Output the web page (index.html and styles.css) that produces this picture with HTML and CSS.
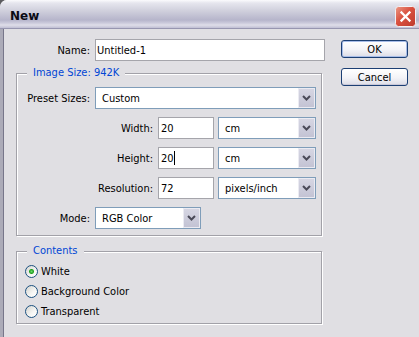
FILE: index.html
```html
<!DOCTYPE html>
<html lang="en">
<head>
    <meta charset="UTF-8">
    <meta name="viewport" content="width=device-width, initial-scale=1.0">
    <title>New</title>
    <link rel="stylesheet" href="styles.css">
</head>
<body>

    <div class="window">
        <!-- Title bar -->
        <div class="titlebar">
            <span class="title">New</span>
            <span class="close">
                <svg width="21" height="21" viewBox="0 0 21 21">
                    <defs>
                        <linearGradient id="closeFill" x1="0" y1="0" x2="1" y2="1">
                            <stop offset="0" stop-color="#ec9a86"/>
                            <stop offset="0.45" stop-color="#d9503f"/>
                            <stop offset="1" stop-color="#bd3a2d"/>
                        </linearGradient>
                    </defs>
                    <rect x="0.5" y="0.5" width="20" height="20" rx="3" fill="url(#closeFill)" stroke="#f2f1f5"/>
                    <path d="M6.5 6.5 L14.5 14.5 M14.5 6.5 L6.5 14.5" stroke="#fff" stroke-width="2.3" stroke-linecap="square"/>
                </svg>
            </span>
        </div>

        <div class="client">
            <div class="form">
                <div class="row name-row">
                    <label class="lbl lbl-short">Name:</label>
                    <div class="field name-field">Untitled-1</div>
                </div>

                <!-- Image Size -->
                <div class="group size-group">
                    <span class="group-title">Image Size: 942K</span>

                    <div class="row">
                        <label class="lbl lbl-inner">Preset Sizes:</label>
                        <div class="select preset-select">
                            <span class="value">Custom</span>
                            <span class="arrow"><svg width="9" height="6" viewBox="0 0 9 6"><path d="M1 1 L4.5 4.5 L8 1" fill="none" stroke="#4a4a58" stroke-width="2"/></svg></span>
                        </div>
                    </div>

                    <div class="row">
                        <label class="lbl lbl-long">Width:</label>
                        <div class="field num-field">20</div>
                        <div class="select unit-select">
                            <span class="value">cm</span>
                            <span class="arrow"><svg width="9" height="6" viewBox="0 0 9 6"><path d="M1 1 L4.5 4.5 L8 1" fill="none" stroke="#4a4a58" stroke-width="2"/></svg></span>
                        </div>
                    </div>

                    <div class="row">
                        <label class="lbl lbl-long">Height:</label>
                        <div class="field num-field">20<span class="caret"></span></div>
                        <div class="select unit-select">
                            <span class="value">cm</span>
                            <span class="arrow"><svg width="9" height="6" viewBox="0 0 9 6"><path d="M1 1 L4.5 4.5 L8 1" fill="none" stroke="#4a4a58" stroke-width="2"/></svg></span>
                        </div>
                    </div>

                    <div class="row">
                        <label class="lbl lbl-long">Resolution:</label>
                        <div class="field num-field">72</div>
                        <div class="select unit-select">
                            <span class="value">pixels/inch</span>
                            <span class="arrow"><svg width="9" height="6" viewBox="0 0 9 6"><path d="M1 1 L4.5 4.5 L8 1" fill="none" stroke="#4a4a58" stroke-width="2"/></svg></span>
                        </div>
                    </div>

                    <div class="row">
                        <label class="lbl lbl-inner">Mode:</label>
                        <div class="select mode-select">
                            <span class="value">RGB Color</span>
                            <span class="arrow"><svg width="9" height="6" viewBox="0 0 9 6"><path d="M1 1 L4.5 4.5 L8 1" fill="none" stroke="#4a4a58" stroke-width="2"/></svg></span>
                        </div>
                    </div>
                </div>

                <!-- Contents -->
                <div class="group contents-group">
                    <span class="group-title">Contents</span>
                    <div class="radio-row"><span class="radio checked"></span>White</div>
                    <div class="radio-row"><span class="radio"></span>Background Color</div>
                    <div class="radio-row"><span class="radio"></span>Transparent</div>
                </div>
            </div>

            <div class="buttons">
                <div class="btn default">OK</div>
                <div class="btn">Cancel</div>
            </div>
        </div>
    </div>

</body>
</html>
```

FILE: styles.css
```css
body {
    margin: 0;
    background-color: #5c5c60;
    font-family: "DejaVu Sans Condensed", "DejaVu Sans", sans-serif;
    font-size: 11px;
    color: #000;
}
.window {
    width: 419px;
    height: 337px;
    background-color: #e0dfe3;
    border-radius: 7px 0 0 0;
    overflow: hidden;
}
.titlebar {
    height: 24px;
    padding: 4px 3px 0 10px;
    display: flex;
    align-items: center;
    border-bottom: 1px solid #9796b0;
    background: linear-gradient(#fbfbfd 0, #e6e6ee 3px, #d2d2de 10px, #b6b5cb 20px, #cbcadb 23px, #dfdee9 25px, #c0bfd3 28px);
}
.title {
    font-family: "DejaVu Sans", sans-serif;
    font-weight: bold;
    font-size: 12px;
    color: #0a0a14;
}
.close {
    margin-left: auto;
    display: flex;
}
.client {
    display: flex;
    height: 308px;
    padding: 10px 0 0 13px;
    border-left: 3px solid #acabb8;
    box-shadow: inset 1px 0 0 #77768a;
    box-sizing: border-box;
}
.form {
    width: 309px;
}
.row {
    display: flex;
    align-items: center;
    height: 22px;
}
.lbl {
    text-align: right;
    margin-right: 5px;
}
.lbl-short {
    width: 74px;
}
.lbl-inner {
    width: 73px;
}
.lbl-long {
    width: 136px;
}
.field {
    height: 22px;
    box-sizing: border-box;
    border: 1px solid #a5a5ab;
    background: #fff;
    display: flex;
    align-items: center;
}
.name-field {
    width: 230px;
    padding-left: 1px;
}
.num-field {
    width: 56px;
    padding-left: 2px;
    margin-right: 4px;
}
.caret {
    display: inline-block;
    width: 1px;
    height: 14px;
    background: #000;
}
.select {
    height: 22px;
    box-sizing: border-box;
    border: 1px solid #7f9db9;
    background: #fff;
    display: flex;
}
.select .value {
    flex: 1;
    padding-left: 6px;
    display: flex;
    align-items: center;
}
.select .arrow {
    width: 17px;
    box-sizing: border-box;
    border: 1px solid #ebebf2;
    background: linear-gradient(#d6d6e3, #c3c3d4);
    display: flex;
    align-items: center;
    justify-content: center;
}
.preset-select {
    width: 221px;
}
.unit-select {
    width: 98px;
}
.mode-select {
    width: 106px;
}
.group {
    position: relative;
    width: 306px;
    box-sizing: border-box;
    border: 1px solid #a2a1a8;
    box-shadow: inset 1px 1px 0 #fff, 1px 1px 0 #fff;
}
.group-title {
    position: absolute;
    top: -8px;
    left: 10px;
    padding: 0 6px;
    background: #e0dfe3;
    color: #0046d5;
}
.size-group {
    margin-top: 12px;
    height: 163px;
    padding-top: 13px;
    display: flex;
    flex-direction: column;
    gap: 8px;
}
.contents-group {
    margin-top: 15px;
    height: 73px;
    padding: 9px 0 0 8px;
}
.radio-row {
    height: 20px;
    display: flex;
    align-items: center;
}
.radio {
    width: 13px;
    height: 13px;
    box-sizing: border-box;
    border: 1px solid #1c5180;
    border-radius: 50%;
    margin-right: 3px;
    background: linear-gradient(135deg, #d4d4d0, #f6f6f4 60%, #fff);
}
.radio.checked {
    background: radial-gradient(circle, #6bd86b 0, #21a121 2px, transparent 3px), linear-gradient(135deg, #d4d4d0, #f6f6f4 60%, #fff);
}
.buttons {
    margin-left: 16px;
    margin-top: 1px;
    display: flex;
    flex-direction: column;
    gap: 10px;
}
.btn {
    width: 67px;
    height: 18px;
    box-sizing: border-box;
    border: 1px solid #1c3f74;
    border-radius: 3px;
    background: linear-gradient(#ffffff, #f3f3f7 55%, #dcdce6);
    box-shadow: inset 0 -1px 0 #c9c8d8;
    display: flex;
    align-items: center;
    justify-content: center;
}
.btn.default {
    box-shadow: inset 0 0 0 1px #a8bde8;
}
```
